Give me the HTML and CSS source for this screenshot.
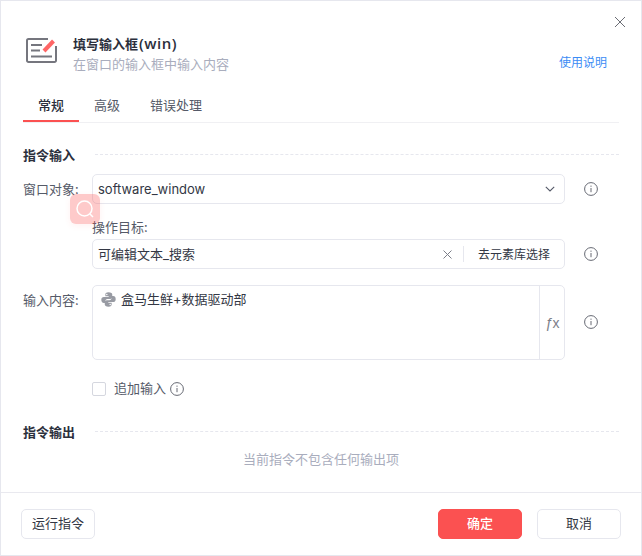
FILE: index.html
```html
<!DOCTYPE html>
<html lang="zh">
<head>
<meta charset="utf-8">
<title>填写输入框(win)</title>
<link rel="stylesheet" href="styles.css">
</head>
<body>
<div class="dialog">
  <button class="close" aria-label="关闭">
    <svg width="12" height="12" viewBox="0 0 12 12"><path d="M1 1l10 10M11 1L1 11" stroke="#6b6d75" stroke-width="1" fill="none"/></svg>
  </button>
  <header class="head">
    <svg class="head-icon" width="32" height="28" viewBox="0 0 32 28">
      <path d="M23 2H3.500A1.500 1.500 0 0 0 2 3.500v20A1.500 1.500 0 0 0 3.500 25h26a1.500 1.500 0 0 0 1.500-1.500V9" stroke="#75767e" stroke-width="2" fill="none"/>
      <path d="M6 8h11M6 13.500h9M6 19.500h21" stroke="#75767e" stroke-width="1.800" fill="none"/>
      <path d="M19 14l9.500-10" stroke="#f66" stroke-width="4" fill="none"/>
    </svg>
    <div class="head-text">
      <div class="title">填写输入框<span class="title-latin">(win)</span></div>
      <div class="subtitle">在窗口的输入框中输入内容</div>
    </div>
    <a class="help">使用说明</a>
  </header>
  <nav class="tabs">
    <span class="tab active">常规</span>
    <span class="tab">高级</span>
    <span class="tab">错误处理</span>
  </nav>
  <main class="body">
    <div class="section"><span>指令输入</span><i></i></div>
    <div class="row row-first">
      <label class="label">窗口对象:</label>
      <div class="field">
        <span class="value value-latin">software_window</span>
        <svg class="chev" width="10" height="6" viewBox="0 0 10 6"><path d="M.8.8L5 5l4.200-4.200" stroke="#555a68" stroke-width="1.100" fill="none"/></svg>
      </div>
      <svg class="info" width="14" height="14" viewBox="0 0 14 14"><use href="#i"/></svg>
    </div>
    <div class="search-badge">
      <svg width="20" height="20" viewBox="0 0 20 20"><circle cx="9.500" cy="9.500" r="7.500" stroke="#fff" stroke-width="1.500" fill="none"/><path d="M15 15l3 3" stroke="#fff" stroke-width="1.500"/></svg>
    </div>
    <div class="sub-label">操作目标:</div>
    <div class="row">
      <div class="field field-indent">
        <span class="value">可编辑文本_搜索</span>
        <svg class="clear" width="9" height="9" viewBox="0 0 9 9"><path d="M.5.5l8 8M8.500.5l-8 8" stroke="#7b7e88" stroke-width="1" fill="none"/></svg>
        <span class="vsep"></span>
        <span class="pick">去元素库选择</span>
      </div>
      <svg class="info" width="14" height="14" viewBox="0 0 14 14"><use href="#i"/></svg>
    </div>
    <div class="row row-area">
      <label class="label">输入内容:</label>
      <div class="field area">
        <div class="area-text">
          <svg class="py" width="15" height="15" viewBox="0 0 24 24"><g fill="#989ba3"><path id="py" fill-rule="evenodd" d="M12 .5C8 .5 7 2 7 4v2.800h5.300v1.200H4.500C2 8 .5 9.500.5 12.500S2 17.500 4.500 17.500H7v-3.100c0-2 1.600-3.400 3.500-3.400h4.300c1.900 0 3.200-1.400 3.200-3.200V4c0-2-2-3.500-6-3.500zM9.300 2.700a1.200 1.200 0 1 1 0 2.400 1.200 1.200 0 0 1 0-2.400z"/><use href="#py" transform="rotate(180 12 12)"/></g></svg>
          <span class="value">盒马生鲜+数据驱动部</span>
        </div>
        <div class="fx">ƒx</div>
      </div>
      <svg class="info" width="14" height="14" viewBox="0 0 14 14"><use href="#i"/></svg>
    </div>
    <div class="check-row">
      <span class="check"></span>
      <span class="check-text">追加输入</span>
      <svg width="14" height="14" viewBox="0 0 14 14"><use href="#i"/></svg>
    </div>
    <div class="section section-out"><span>指令输出</span><i></i></div>
    <div class="empty">当前指令不包含任何输出项</div>
  </main>
  <footer class="foot">
    <button class="btn run">运行指令</button>
    <span class="spacer"></span>
    <button class="btn primary">确定</button>
    <button class="btn cancel">取消</button>
  </footer>
</div>
<svg class="defs" width="0" height="0"><defs><g id="i" fill="none" stroke="#666973"><circle cx="7" cy="7" r="6.400" stroke-width="1"/><path d="M7 6v4.200" stroke-width="1"/><path d="M7 3.600v1.200" stroke-width="1"/></g></defs></svg>
</body>
</html>
```
FILE: styles.css
```css
* { box-sizing: border-box; }
html, body { margin: 0; padding: 0; background: #fff; }
body { font-family: "Noto Sans CJK SC", "Noto Sans", sans-serif; font-size: 13px; color: #333744; }
.dialog { position: relative; width: 642px; height: 556px; background: #fff; border: 1px solid #e6e7ee; display: flex; flex-direction: column; overflow: hidden; }
.close { position: absolute; top: 14px; right: 14px; width: 14px; height: 14px; padding: 1px; border: 0; background: none; display: flex; }
.head { display: flex; align-items: flex-start; height: 77px; padding: 34px 34px 0 24px; }
.head-icon { flex: none; margin-top: 2px; }
.head-text { margin-left: 16px; flex: 1; }
.title { font-size: 13px; font-weight: 700; line-height: 18px; color: #2b2f3c; }
.title-latin { font-family: "Open Sans", sans-serif; font-size: 15px; font-weight: 600; line-height: 14px; letter-spacing: .5px; margin-left: 1px; }
.subtitle { font-size: 13px; line-height: 18px; margin-top: 2px; color: #a9adbd; }
.help { font-size: 12px; line-height: 18px; margin-top: 18px; color: #3b8cf5; }
.tabs { display: flex; margin: 0 22px 0 22px; height: 45px; border-bottom: 1px solid #f0f0f3; }
.tab { height: 44px; padding: 0 15px; font-size: 13px; line-height: 54px; color: #555a68; border-bottom: 2px solid transparent; }
.tab.active { width: 56px; color: #2b2f3c; font-weight: 500; border-bottom-color: #fb5151; }
.body { position: relative; flex: 1; padding: 0 22px 0 22px; }
.section { display: flex; align-items: center; gap: 20px; height: 18px; margin-top: 22px; font-weight: 700; color: #2b2f3c; }
.section i { flex: 1; border-top: 1px dashed #e6e7ee; }
.section-out { margin-top: 25px; }
.row { display: flex; align-items: center; }
.row-first { margin-top: 11px; }
.row-area { margin-top: 16px; align-items: flex-start; }
.label { width: 69px; flex: none; line-height: 28px; color: #555a68; }
.row-area .label { line-height: 30px; }
.sub-label { margin: 13px 0 3px 69px; height: 19px; line-height: 19px; color: #555a68; }
.field { flex: none; width: 473px; height: 30px; border: 1px solid #e6e7ee; border-radius: 5px; display: flex; align-items: center; padding-left: 5px; background: #fff; }
.field-indent { margin-left: 69px; }
.value { flex: 1; color: #333744; font-family: Inter, "Noto Sans CJK SC", sans-serif; font-size: 13px; white-space: nowrap; padding-bottom: 2px; }
.value-latin { padding-bottom: 0; }
.chev { margin-right: 9px; }
.clear { flex: none; margin-right: 11px; }
.vsep { width: 1px; height: 16px; background: #e6e7ee; }
.pick { flex: none; width: 100px; text-align: center; font-size: 12px; color: #333744; padding-bottom: 2px; }
.info { flex: none; margin-left: 19px; }
.search-badge { position: absolute; left: 69px; top: 71px; width: 30px; height: 30px; border-radius: 6px; background: rgba(251, 81, 81, .3); display: flex; align-items: center; justify-content: center; box-shadow: 0 2px 6px rgba(251, 81, 81, .08); }
.area { height: 75px; padding: 0; align-items: stretch; }
.area-text { flex: 1; display: flex; align-items: flex-start; padding: 3px 0 0 8px; line-height: 20px; gap: 5px; }
.py { flex: none; margin-top: 3px; }
.fx { width: 25px; border-left: 1px solid #e6e7ee; color: #7b7e88; font-family: "Liberation Sans", sans-serif; font-size: 14px; letter-spacing: -1px; display: flex; align-items: center; justify-content: center; }
.row-area .info { margin-top: 30px; }
.check-row { display: flex; align-items: center; margin: 21px 0 0 69px; height: 16px; }
.check { width: 14px; height: 14px; border: 1px solid #d5d7df; border-radius: 2px; }
.check-text { margin: 0 4px 0 8px; padding-bottom: 3px; color: #555a68; }
.empty { margin-top: 10px; text-align: center; line-height: 18px; color: #a9adbd; }
.foot { flex: none; height: 63px; border-top: 1px solid #e9e9ef; display: flex; align-items: flex-start; padding: 16px 20px 0 20px; }
.spacer { flex: 1; }
.btn { height: 30px; border: 1px solid #e6e7ee; border-radius: 5px; background: #fff; font: inherit; font-size: 13px; color: #333744; padding: 0 0 4px; }
.run { width: 74px; }
.primary { width: 84px; background: #fb5151; border-color: #fb5151; color: #fff; font-weight: 500; }
.cancel { width: 84px; margin-left: 15px; }
.defs { position: absolute; }
```
